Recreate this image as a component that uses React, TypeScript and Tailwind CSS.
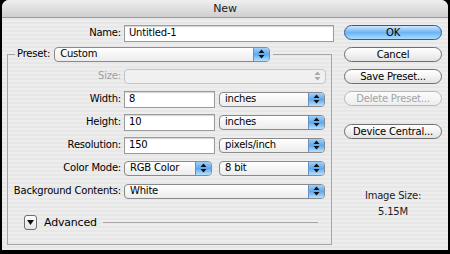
import React from 'react'

function Arrows({ dim }: { dim?: boolean }) {
  const c = dim ? '#a8a8a8' : '#111'
  return (
    <svg width="7" height="10" viewBox="0 0 7 10">
      <path d="M0.5 4 L3.5 0.5 L6.5 4 Z" fill={c} />
      <path d="M0.5 6 L3.5 9.5 L6.5 6 Z" fill={c} />
    </svg>
  )
}

function Select({
  value,
  className,
  disabled,
}: {
  value: string
  className: string
  disabled?: boolean
}) {
  return (
    <div
      className={`h-[15px] flex items-stretch rounded-[4px] border ${
        disabled ? 'border-[#c4c4c4] bg-[#f0f0f0]' : 'border-[#8a8a8a] bg-gradient-to-b from-[#ffffff] to-[#ececec]'
      } overflow-hidden ${className}`}
    >
      <div className="flex-1 flex items-center pl-[5px] text-[10px] text-black">{value}</div>
      {disabled ? (
        <div className="w-[16px] flex items-center justify-center">
          <Arrows dim />
        </div>
      ) : (
        <div className="w-[16px] flex items-center justify-center bg-gradient-to-b from-[#9fd0fb] via-[#5ea9ee] to-[#b7e0ff] border-l border-[#6b8fc0]">
          <Arrows />
        </div>
      )}
    </div>
  )
}

function Field({ value, className }: { value: string; className: string }) {
  return (
    <div
      className={`h-[17px] border border-[#9c9c9c] bg-white shadow-[inset_0_1px_1px_rgba(0,0,0,0.18)] flex items-center pl-[4px] text-[10px] text-black ${className}`}
    >
      {value}
    </div>
  )
}

function Row({
  label,
  dim,
  children,
}: {
  label: string
  dim?: boolean
  children: React.ReactNode
}) {
  return (
    <div className="h-[16px] flex items-center gap-[3px]">
      <div className={`w-[113px] text-right ${dim ? 'text-[#a0a0a0]' : 'text-black'}`}>{label}</div>
      {children}
    </div>
  )
}

function Button({
  label,
  primary,
  disabled,
}: {
  label: string
  primary?: boolean
  disabled?: boolean
}) {
  let tone = 'border-[#6e6e6e] bg-gradient-to-b from-[#ffffff] via-[#f2f2f2] to-[#e2e2e2] text-black'
  if (primary) tone = 'border-[#2f5a9a] bg-gradient-to-b from-[#cfe8ff] via-[#6cb4f3] to-[#a9dcff] text-black'
  if (disabled) tone = 'border-[#b8b8b8] bg-gradient-to-b from-[#fbfbfb] to-[#eeeeee] text-[#a4a4a4]'
  return (
    <div className={`h-[15px] w-[98px] rounded-full border flex items-center justify-center ${tone}`}>
      {label}
    </div>
  )
}

export default function App() {
  return (
    <div className="w-[450px] h-[254px] bg-black px-[2px] pb-[4px] overflow-hidden font-['DejaVu_Sans',sans-serif] text-[10px] tracking-[-0.2px] leading-none">
      <div className="h-full flex flex-col rounded-t-[7px] overflow-hidden bg-[repeating-linear-gradient(0deg,#ededed_0px,#ededed_2px,#e7e7e7_2px,#e7e7e7_4px)]">
        {/* Title bar */}
        <div className="h-[18px] shrink-0 bg-gradient-to-b from-[#efefef] to-[#cfcfcf] border-b border-[#9d9d9d] flex items-center justify-center text-[11px] text-[#222]">
          New
        </div>

        <div className="flex-1 flex pt-[7px]">
          {/* Left side */}
          <div className="w-[342px] flex flex-col">
            <div className="h-[16px] flex items-center gap-[3px]">
              <div className="w-[119px] text-right">Name:</div>
              <Field value="Untitled-1" className="w-[210px]" />
            </div>

            <fieldset className="ml-[5px] mt-[6px] w-[325px] h-[198px] border border-[#a6a6a6] border-t-[#a6a6a6]">
              <legend className="ml-[7px] px-[2px] pr-[3px]">
                <div className="flex items-center gap-[4px] h-[14px]">
                  <span>Preset:</span>
                  <Select value="Custom" className="w-[216px]" />
                </div>
              </legend>

              <div className="flex flex-col gap-[7px] pt-[7px]">
                <Row label="Size:" dim>
                  <Select value="" disabled className="w-[202px]" />
                </Row>
                <Row label="Width:">
                  <Field value="8" className="w-[91px]" />
                  <Select value="inches" className="ml-[1px] w-[106px]" />
                </Row>
                <Row label="Height:">
                  <Field value="10" className="w-[91px]" />
                  <Select value="inches" className="ml-[1px] w-[106px]" />
                </Row>
                <Row label="Resolution:">
                  <Field value="150" className="w-[91px]" />
                  <Select value="pixels/inch" className="ml-[1px] w-[106px]" />
                </Row>
                <Row label="Color Mode:">
                  <Select value="RGB Color" className="w-[88px]" />
                  <Select value="8 bit" className="ml-[4px] w-[106px]" />
                </Row>
                <Row label="Background Contents:">
                  <Select value="White" className="w-[201px]" />
                </Row>
              </div>

              <div className="mt-[16px] h-[15px] flex items-center">
                <div className="ml-[16px] w-[13px] h-[15px] rounded-[3px] border border-[#6e6e6e] bg-gradient-to-b from-[#ffffff] to-[#e4e4e4] flex items-center justify-center">
                  <svg width="7" height="5" viewBox="0 0 7 5">
                    <path d="M0 0 L7 0 L3.5 5 Z" fill="#111" />
                  </svg>
                </div>
                <span className="ml-[7px] text-[11px]">Advanced</span>
                <div className="flex-1 ml-[6px] mr-[13px] border-t border-[#a6a6a6]" />
              </div>
            </fieldset>
          </div>

          {/* Right side */}
          <div className="w-[98px] flex flex-col">
            <div className="flex flex-col gap-[7px]">
              <Button label="OK" primary />
              <Button label="Cancel" />
              <Button label="Save Preset..." />
              <Button label="Delete Preset..." disabled />
            </div>
            <div className="mt-[18px]">
              <Button label="Device Central..." />
            </div>
            <div className="mt-[52px] flex flex-col items-center gap-[6px] text-[#222]">
              <span>Image Size:</span>
              <span>5.15M</span>
            </div>
          </div>
        </div>
      </div>
    </div>
  )
}
